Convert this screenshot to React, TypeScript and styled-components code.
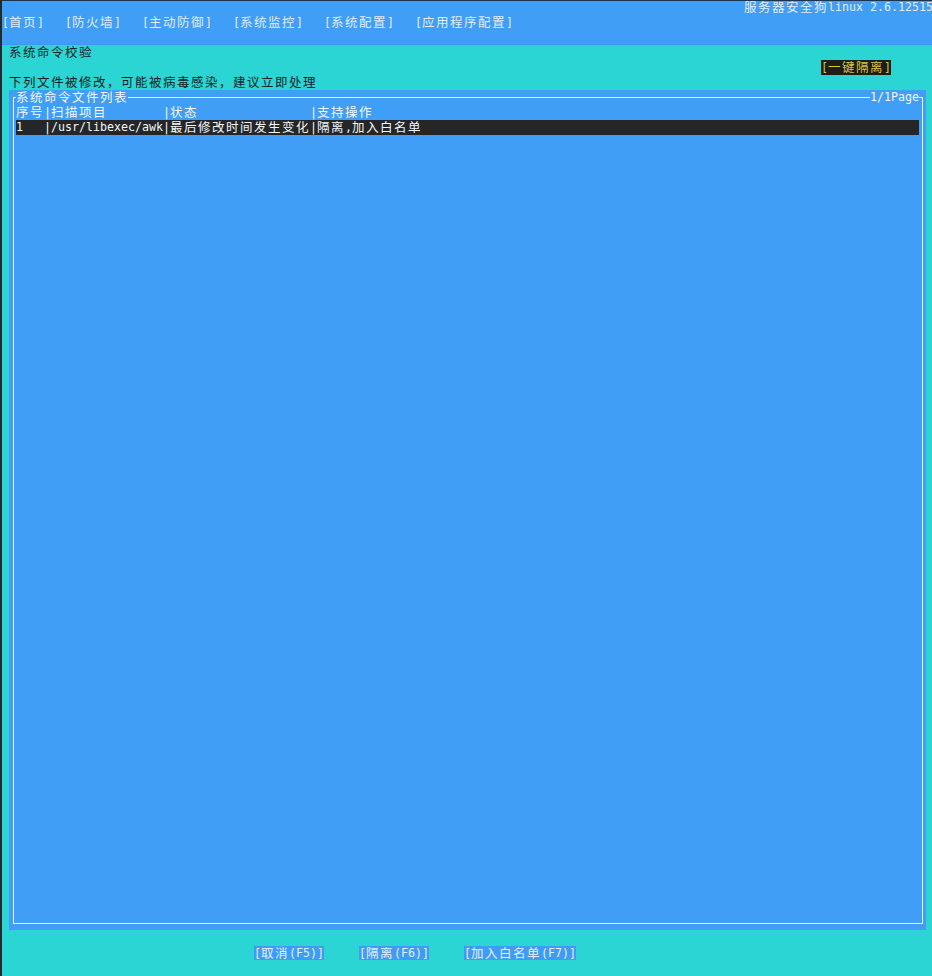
import React from "react";
import styled, { createGlobalStyle } from "styled-components";

const BLUE = "#409ef6";
const TEAL = "#2ad5d4";
const HAN_RE = /[\u2e80-\u9fff\uff00-\uffef]/;

const Global = createGlobalStyle`
  html, body { margin: 0; padding: 0; background: ${TEAL}; }
  body {
    font-family: "DejaVu Sans Mono", "Noto Sans CJK SC", monospace;
    font-size: 11.63px;
    line-height: 15px;
  }
`;

const Han = styled.span`
  font-family: "Noto Sans CJK SC", "DejaVu Sans", sans-serif;
  font-size: 12.5px;
  letter-spacing: 1.5px;
  line-height: 13px;
  vertical-align: top;
`;

const Lat = styled.span`
  font-family: "DejaVu Sans Mono", monospace;
  font-size: 11.63px;
  line-height: 15px;
  vertical-align: top;
  white-space: pre;
`;

function Txt({ children }: { children: string }) {
  const parts =
    children.match(/[\u2e80-\u9fff\uff00-\uffef]+|[^\u2e80-\u9fff\uff00-\uffef]+/g) || [];
  return (
    <>
      {parts.map((p, i) =>
        HAN_RE.test(p) ? <Han key={i}>{p}</Han> : <Lat key={i}>{p}</Lat>
      )}
    </>
  );
}

const Screen = styled.div`
  width: 932px;
  height: 976px;
  box-sizing: border-box;
  border-left: 2px solid #1d2c31;
  background: ${TEAL};
  overflow: hidden;
  display: flex;
  flex-direction: column;
  color: #17211f;
`;

const Header = styled.header`
  flex: none;
  height: 45px;
  background: ${BLUE};
  box-shadow: inset 0 1px 0 #1b3550, inset 0 -12px 0 -11px #3d98ee;
  color: #e3ecf6;
`;

const TitleLine = styled.div`
  height: 15px;
  padding-left: 742px;
  white-space: nowrap;
  overflow: hidden;
`;

const Menu = styled.nav`
  height: 15px;
  display: flex;
  gap: 21px;
  white-space: nowrap;
`;

const Line = styled.div<{ $indent?: number }>`
  flex: none;
  height: 15px;
  padding-left: ${(p) => (p.$indent ?? 0) * 7}px;
  white-space: nowrap;
  overflow: hidden;
`;

const QuarantineAll = styled.span`
  display: inline-block;
  height: 15px;
  background: #1d1d1b;
  color: #dcc63e;
`;

const Panel = styled.section`
  flex: none;
  margin-left: 7px;
  width: 917px;
  height: 840px;
  box-sizing: border-box;
  padding: 7px 3px 6px 4px;
  background: ${BLUE};
  display: flex;
  color: #f3f6fa;
`;

const Frame = styled.div`
  flex: 1;
  border: 1px solid #eef3f9;
  padding: 0 3px 0 2px;
  display: flex;
  flex-direction: column;
`;

const FrameTop = styled.div`
  margin-top: -8px;
  height: 15px;
  display: flex;
  justify-content: space-between;
  white-space: nowrap;
`;

const FrameLabel = styled.span`
  background: ${BLUE};
  height: 15px;
`;

const TableRow = styled.div<{ $selected?: boolean }>`
  height: 15px;
  display: grid;
  grid-template-columns: 28px 7px 112px 7px 140px 7px 1fr;
  background: ${(p) => (p.$selected ? "#262626" : "transparent")};
  white-space: nowrap;
  overflow: hidden;
`;

const Cell = styled.span`
  overflow: hidden;
`;

const ButtonBar = styled.div`
  flex: none;
  height: 15px;
  margin-top: 15px;
  padding-left: 252px;
  display: flex;
  gap: 35px;
`;

const KeyButton = styled.span`
  display: inline-block;
  height: 14px;
  margin-top: 1px;
  background: #3f9cf4;
  color: #e6eef7;
  white-space: nowrap;
  overflow: hidden;
`;

const menuItems = ["[首页]", "[防火墙]", "[主动防御]", "[系统监控]", "[系统配置]", "[应用程序配置]"];

const rows = [
  { cells: ["序号", "扫描项目", "状态", "支持操作"], selected: false },
  { cells: ["1", "/usr/libexec/awk", "最后修改时间发生变化", "隔离,加入白名单"], selected: true },
];

export default function App() {
  return (
    <>
      <Global />
      <Screen>
        <Header>
          <TitleLine>
            <Txt>服务器安全狗linux 2.6.12515</Txt>
          </TitleLine>
          <Menu>
            {menuItems.map((m) => (
              <span key={m}>
                <Txt>{m}</Txt>
              </span>
            ))}
          </Menu>
        </Header>
        <Line $indent={1}>
          <Txt>系统命令校验</Txt>
        </Line>
        <Line $indent={117}>
          <QuarantineAll>
            <Txt>[一键隔离]</Txt>
          </QuarantineAll>
        </Line>
        <Line $indent={1}>
          <Txt>下列文件被修改，可能被病毒感染，建议立即处理</Txt>
        </Line>
        <Panel>
          <Frame>
            <FrameTop>
              <FrameLabel>
                <Txt>系统命令文件列表</Txt>
              </FrameLabel>
              <FrameLabel>
                <Txt>1/1Page</Txt>
              </FrameLabel>
            </FrameTop>
            {rows.map((r, i) => (
              <TableRow key={i} $selected={r.selected}>
                <Cell>
                  <Txt>{r.cells[0]}</Txt>
                </Cell>
                <Cell>|</Cell>
                <Cell>
                  <Txt>{r.cells[1]}</Txt>
                </Cell>
                <Cell>|</Cell>
                <Cell>
                  <Txt>{r.cells[2]}</Txt>
                </Cell>
                <Cell>|</Cell>
                <Cell>
                  <Txt>{r.cells[3]}</Txt>
                </Cell>
              </TableRow>
            ))}
          </Frame>
        </Panel>
        <ButtonBar>
          <KeyButton>
            <Txt>[取消(F5)]</Txt>
          </KeyButton>
          <KeyButton>
            <Txt>[隔离(F6)]</Txt>
          </KeyButton>
          <KeyButton>
            <Txt>[加入白名单(F7)]</Txt>
          </KeyButton>
        </ButtonBar>
      </Screen>
    </>
  );
}
